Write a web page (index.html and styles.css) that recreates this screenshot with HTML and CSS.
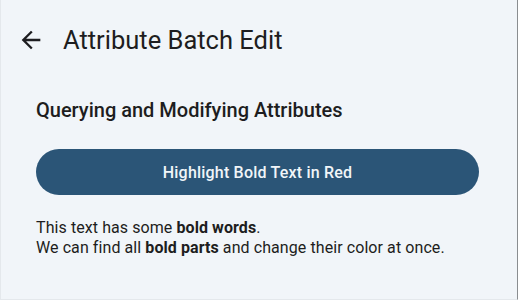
FILE: index.html
```html
<!DOCTYPE html>
<html lang="en">

<head>
    <meta charset="UTF-8">
    <meta name="viewport" content="width=device-width, initial-scale=1.0">
    <title>Attribute Batch Edit</title>
    <link rel="stylesheet" href="styles.css">
</head>

<body>
    <div class="app-bar">
        <button class="back-btn" aria-label="Back">
            <svg width="28" height="28" viewBox="0 0 24 24">
                <path d="M20 11H7.83l5.59-5.59L12 4l-8 8 8 8 1.41-1.41L7.83 13H20v-2z" fill="#1d1d20"/>
            </svg>
        </button>
        <h1>Attribute Batch Edit</h1>
    </div>

    <div class="content">
        <h2>Querying and Modifying Attributes</h2>
        <button class="action-btn">Highlight Bold Text in Red</button>
        <p class="sample">
            This text has some <b>bold words</b>.<br>
            We can find all <b>bold parts</b> and change their color at once.
        </p>
    </div>
</body>

</html>
```

FILE: styles.css
```css
html,
body {
    height: 100%;
}

body {
    font-family: 'Roboto', sans-serif;
    background-color: #f1f5f9;
    color: #1d1d20;
    margin: 0;
    box-sizing: border-box;
    border-left: 1px solid #e4e8ec;
    border-right: 1px solid #8a8d90;
    border-bottom: 1px solid #e4e8ec;
}

.app-bar {
    display: flex;
    align-items: center;
    height: 80px;
    padding: 0 16px;
}

.back-btn {
    background: none;
    border: none;
    padding: 0;
    width: 28px;
    height: 28px;
    display: flex;
    align-items: center;
    justify-content: center;
    cursor: pointer;
}

.app-bar h1 {
    margin: 0 0 0 18px;
    font-size: 25.5px;
    font-weight: 400;
    color: #1d1d20;
}

.content {
    padding: 18px 38px 0 35px;
}

.content h2 {
    margin: 0;
    font-size: 20px;
    font-weight: 500;
    line-height: 24px;
}

.action-btn {
    display: block;
    width: 100%;
    height: 46px;
    margin-top: 27px;
    border: none;
    border-radius: 23px;
    background-color: #2b5577;
    color: #f1f5f9;
    font-family: 'Roboto', sans-serif;
    font-size: 16px;
    font-weight: 500;
    letter-spacing: 0.2px;
    cursor: pointer;
}

.sample {
    margin: 23px 0 0;
    font-size: 16px;
    line-height: 20px;
    letter-spacing: 0.08px;
}

.sample b {
    font-weight: 700;
}
```
